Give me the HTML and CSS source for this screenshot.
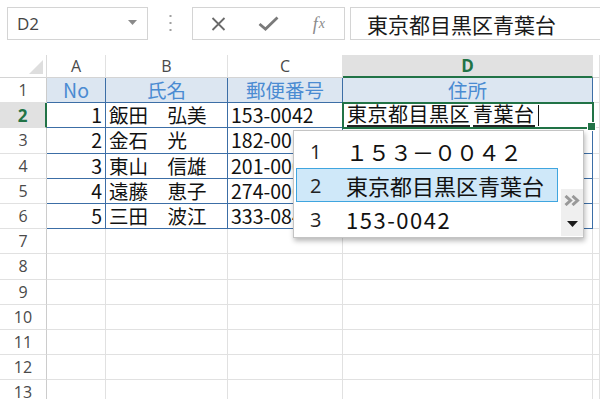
FILE: index.html
```html
<!DOCTYPE html>
<html lang="ja">
<head>
<meta charset="utf-8">
<title>Excel</title>
<link rel="stylesheet" href="styles.css">
</head>
<body>
<div class="app">
  <div class="toolbar">
    <div class="namebox">
      <span>D2</span>
      <svg class="nbcaret" width="9" height="5" viewBox="0 0 9 5"><path d="M0 0H9L4.5 5Z" fill="#8a8a8a"/></svg>
    </div>
    <div class="sep">
      <svg width="3" height="17" viewBox="0 0 3 17"><rect x="0.5" y="0" width="2" height="2" fill="#a0a0a0"/><rect x="0.5" y="7" width="2" height="2" fill="#a0a0a0"/><rect x="0.5" y="14" width="2" height="2" fill="#a0a0a0"/></svg>
    </div>
    <div class="fbtns">
      <div class="fbtn"><svg width="15" height="14" viewBox="0 0 15 14"><path d="M1.5 1L13.5 13M13.5 1L1.5 13" stroke="#6a6a6a" stroke-width="1.8" fill="none"/></svg></div>
      <div class="fbtn"><svg width="21" height="15" viewBox="0 0 21 15"><path d="M1.5 8L7.5 13L19.5 1.5" stroke="#7a7a7a" stroke-width="2.8" fill="none"/></svg></div>
      <div class="fbtn fx"><i>f</i><i class="fxx">x</i></div>
    </div>
    <div class="fbar">東京都目黒区青葉台</div>
  </div>

  <div class="sheet">
    <div class="corner"><div class="tri"></div></div>
    <div class="ch">A</div><div class="ch">B</div><div class="ch">C</div><div class="ch sel">D</div><div class="ch"></div>

    <div class="rh">1</div>
    <div class="c t th">No</div><div class="c t th">氏名</div><div class="c t th">郵便番号</div><div class="c t th">住所</div><div class="c"></div>

    <div class="rh sel">2</div>
    <div class="c t num">1</div><div class="c t">飯田　弘美</div><div class="c t">153-0042</div>
    <div class="c t active"><span class="u seg1">東京都目黒区</span><span class="u">青葉台</span><span class="cur"></span></div><div class="c"></div>

    <div class="rh">3</div>
    <div class="c t num">2</div><div class="c t">金石　光</div><div class="c t">182-0011</div><div class="c t"></div><div class="c"></div>

    <div class="rh">4</div>
    <div class="c t num">3</div><div class="c t">東山　信雄</div><div class="c t">201-0002</div><div class="c t"></div><div class="c"></div>

    <div class="rh">5</div>
    <div class="c t num">4</div><div class="c t">遠藤　恵子</div><div class="c t">274-0063</div><div class="c t"></div><div class="c"></div>

    <div class="rh">6</div>
    <div class="c t num">5</div><div class="c t">三田　波江</div><div class="c t">333-0844</div><div class="c t"></div><div class="c"></div>

    <div class="rh">7</div><div class="c"></div><div class="c"></div><div class="c"></div><div class="c"></div><div class="c"></div>
    <div class="rh">8</div><div class="c"></div><div class="c"></div><div class="c"></div><div class="c"></div><div class="c"></div>
    <div class="rh">9</div><div class="c"></div><div class="c"></div><div class="c"></div><div class="c"></div><div class="c"></div>
    <div class="rh">10</div><div class="c"></div><div class="c"></div><div class="c"></div><div class="c"></div><div class="c"></div>
    <div class="rh">11</div><div class="c"></div><div class="c"></div><div class="c"></div><div class="c"></div><div class="c"></div>
    <div class="rh">12</div><div class="c"></div><div class="c"></div><div class="c"></div><div class="c"></div><div class="c"></div>
    <div class="rh">13</div><div class="c"></div><div class="c"></div><div class="c"></div><div class="c"></div><div class="c"></div>
  </div>

  <div class="ime">
    <div class="cands">
      <div class="cand"><span class="n">1</span><span class="w">１５３－００４２</span></div>
      <div class="cand on"><span class="n">2</span><span class="w">東京都目黒区青葉台</span></div>
      <div class="cand"><span class="n">3</span><span class="w hw">153-0042</span></div>
    </div>
    <div class="side">
      <svg width="16" height="11" viewBox="0 0 16 11"><path d="M1.5 1L6.5 5.5L1.5 10M8.5 1L13.5 5.5L8.5 10" stroke="#999" stroke-width="3" fill="none"/></svg>
      <svg width="11" height="6" viewBox="0 0 11 6"><path d="M0 0H11L5.5 6Z" fill="#1a1a1a"/></svg>
    </div>
  </div>
</div>
</body>
</html>
```

FILE: styles.css
```css
* { box-sizing: border-box; }
body {
  margin: 0;
  background: #fff;
  font-family: "Noto Sans CJK JP", "Noto Sans", sans-serif;
  color: #111;
}
.app {
  width: 600px;
  height: 399px;
  overflow: hidden;
  position: relative;
  background: #fff;
}

/* toolbar */
.toolbar {
  display: flex;
  height: 55px;
  padding: 7px 0 15px 7px;
}
.namebox {
  width: 141px;
  border: 1px solid #d4d4d4;
  display: flex;
  align-items: center;
  justify-content: space-between;
  padding: 0 10px 0 9px;
  font-family: "Open Sans", "Liberation Sans", sans-serif;
  font-size: 17px;
  color: #444;
}
.nbcaret { margin-top: -3px; }
.sep {
  width: 44px;
  display: flex;
  align-items: center;
  justify-content: center;
}
.fbtns {
  width: 153px;
  border: 1px solid #d4d4d4;
  display: flex;
  align-items: center;
}
.fbtn {
  width: 51px;
  display: flex;
  justify-content: center;
  align-items: center;
}
.fx {
  font-family: "Liberation Serif", "DejaVu Serif", serif;
  font-size: 18px;
  color: #8a8a8a;
  line-height: 1;
}
.fxx { font-size: 14px; margin-left: 1px; }
.fbar {
  flex: 1;
  margin-left: 5px;
  border: 1px solid #d4d4d4;
  border-right: none;
  padding-left: 16px;
  display: flex;
  align-items: center;
  font-size: 21px;
  color: #1a1a1a;
  white-space: nowrap;
}

/* sheet */
.sheet {
  display: grid;
  grid-template-columns: 47px 59px 122px 115px 250px 1fr;
  grid-template-rows: 23px repeat(13, 25.2px);
}
.corner {
  border-right: 1px solid #dadada;
  border-bottom: 1px solid #d4d4d4;
  display: flex;
  justify-content: flex-end;
  align-items: flex-end;
  padding: 0 3px 3px 0;
}
.tri {
  width: 14px;
  height: 14px;
  background: #dedede;
  clip-path: polygon(100% 0, 100% 100%, 0 100%);
}
.ch, .rh {
  font-family: "Open Sans", "Liberation Sans", sans-serif;
  font-size: 16px;
  color: #4a4a4a;
  display: flex;
  align-items: center;
  justify-content: center;
  border-bottom: 1px solid #e1e1e1;
}
.ch {
  border-right: 1px solid #e1e1e1;
  border-bottom-color: #d4d4d4;
}
.ch.sel {
  background: #e1e1e1;
  color: #217346;
  font-weight: bold;
  font-size: 17px;
  border-bottom: 2px solid #217346;
}
.rh {
  border-right: 1px solid #cccccc;
}
.rh.sel {
  background: #e1e1e1;
  color: #217346;
  font-weight: bold;
  font-size: 17px;
  border-right: 2px solid #217346;
}
.c {
  border-right: 1px solid #e1e1e1;
  border-bottom: 1px solid #e1e1e1;
  font-size: 19.5px;
  line-height: 24px;
  padding: 0 3px;
  white-space: nowrap;
  display: flex;
  align-items: center;
}
.t {
  border-right-color: #3c6ea6;
  border-bottom-color: #3c6ea6;
}
.th {
  background: #dce6f1;
  color: #4a8bd2;
  justify-content: center;
}
.num { justify-content: flex-end; }

.active {
  position: relative;
  z-index: 2;
  outline: 2px solid #217346;
  outline-offset: -1px;
  padding-left: 4px;
  font-size: 20px;
}
.active::after {
  content: "";
  position: absolute;
  right: -4px;
  bottom: -4px;
  width: 7px;
  height: 7px;
  background: #217346;
  border: 1px solid #fff;
}
.u {
  line-height: 22px;
  border-bottom: 2px solid #222;
  letter-spacing: 0.5px;
}
.seg1 { margin-right: 3px; }
.cur {
  width: 1px;
  height: 21px;
  background: #111;
  margin-left: 3px;
}

/* IME candidate window */
.ime {
  position: absolute;
  left: 293px;
  top: 130px;
  width: 291px;
  height: 108px;
  z-index: 5;
  background: #fff;
  border: 1px solid #c4c4c4;
  box-shadow: 1px 3px 5px rgba(0, 0, 0, 0.28);
  display: flex;
  gap: 3px;
  padding: 3px 0 1px 2px;
}
.cands {
  width: 262px;
  display: flex;
  flex-direction: column;
}
.cand {
  height: 34px;
  display: flex;
  align-items: center;
  border: 1px solid transparent;
}
.cand.on {
  background: #cfe8f9;
  border-color: #3fa5df;
}
.n {
  width: 49px;
  padding-left: 13px;
  font-family: "Open Sans", "Liberation Sans", sans-serif;
  font-size: 20px;
  color: #222;
}
.w {
  font-size: 22px;
  line-height: 30px;
  color: #111;
  white-space: nowrap;
}
.hw { letter-spacing: 1.5px; }
.side {
  width: 22px;
  height: 47px;
  align-self: flex-end;
  background: #efefef;
  display: flex;
  flex-direction: column;
  align-items: center;
  padding-top: 6px;
  gap: 15px;
}
.side svg { display: block; }
```
